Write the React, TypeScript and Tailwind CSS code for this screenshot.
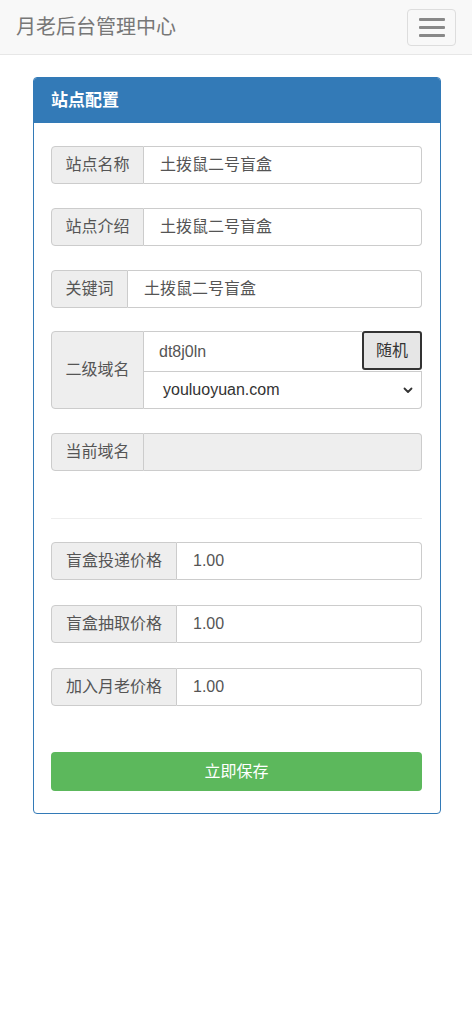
import React from 'react';

const font = { fontFamily: '"Liberation Sans", "Noto Sans CJK SC", sans-serif' };

const Row: React.FC<{ label: string; value?: string; labelW: string; disabled?: boolean; className?: string }> = ({ label, value, labelW, disabled, className }) => (
  <div className={`flex h-[38px] ${className ?? ''}`}>
    <div className={`${labelW} flex items-center justify-center flex-shrink-0 bg-[#eeeeee] border border-[#cccccc] rounded-l-[4px] text-[16px] text-[#555555]`}>
      {label}
    </div>
    <div className={`flex-1 flex items-center border border-l-0 border-[#cccccc] rounded-r-[4px] pl-[16px] text-[16px] text-[#555555] ${disabled ? 'bg-[#eeeeee]' : 'bg-white'}`}>
      {value}
    </div>
  </div>
);

export default function App() {
  return (
    <div className="min-h-[1024px] bg-white" style={font}>
      <nav className="h-[55px] bg-[#f8f8f8] border-b border-[#e7e7e7] flex items-center justify-between pl-[16px] pr-[16px]">
        <span className="text-[20px] text-[#777777]">月老后台管理中心</span>
        <button className="w-[49px] h-[37px] border border-[#dddddd] rounded-[4px] flex flex-col items-center justify-center gap-[5px]">
          <span className="block w-[26px] h-[3px] bg-[#888888] rounded-[1px]" />
          <span className="block w-[26px] h-[3px] bg-[#888888] rounded-[1px]" />
          <span className="block w-[26px] h-[3px] bg-[#888888] rounded-[1px]" />
        </button>
      </nav>

      <div className="pl-[33px] pr-[31px] pt-[22px]">
        <div className="border border-[#337ab7] rounded-[4px] overflow-hidden">
          <div className="h-[45px] bg-[#337ab7] flex items-center pl-[17px] text-white text-[17px] font-bold">站点配置</div>
          <div className="pl-[17px] pr-[18px] pt-[23px] pb-[22px]">
            <Row label="站点名称" value="土拨鼠二号盲盒" labelW="w-[93px]" />
            <Row label="站点介绍" value="土拨鼠二号盲盒" labelW="w-[93px]" className="mt-[24px]" />
            <Row label="关键词" value="土拨鼠二号盲盒" labelW="w-[77px]" className="mt-[24px]" />

            <div className="flex mt-[23px] h-[78px]">
              <div className="w-[93px] flex items-center justify-center flex-shrink-0 bg-[#eeeeee] border border-[#cccccc] rounded-l-[4px] text-[16px] text-[#555555]">
                二级域名
              </div>
              <div className="flex-1 flex flex-col">
                <div className="flex h-[40px]">
                  <div className="flex-1 flex items-center border-t border-[#cccccc] bg-white pl-[15px] text-[16px] text-[#555555]">dt8j0ln</div>
                  <button className="w-[60px] h-[39px] border-2 border-[#333333] rounded-[3px] bg-[#e6e6e6] text-[16px] text-[#333333]">随机</button>
                </div>
                <div className="flex-1 flex items-center justify-between border border-l-0 border-[#cccccc] rounded-br-[4px] bg-white pl-[19px] pr-[7px] text-[16px] text-[#333333]">
                  <span>youluoyuan.com</span>
                  <svg width="12" height="12" viewBox="0 0 12 12" fill="none" stroke="#333" strokeWidth="1.8" strokeLinecap="round" strokeLinejoin="round">
                    <path d="M2.5 4.5 6 8l3.5-3.5" />
                  </svg>
                </div>
              </div>
            </div>

            <Row label="当前域名" labelW="w-[93px]" disabled className="mt-[24px]" />

            <div className="mt-[47px] border-t border-[#eeeeee]" />

            <Row label="盲盒投递价格" value="1.00" labelW="w-[126px]" className="mt-[23px]" />
            <Row label="盲盒抽取价格" value="1.00" labelW="w-[126px]" className="mt-[25px]" />
            <Row label="加入月老价格" value="1.00" labelW="w-[126px]" className="mt-[25px]" />

            <button className="mt-[46px] w-full h-[39px] bg-[#5cb85c] rounded-[4px] text-white text-[16px]">立即保存</button>
          </div>
        </div>
      </div>
    </div>
  );
}
